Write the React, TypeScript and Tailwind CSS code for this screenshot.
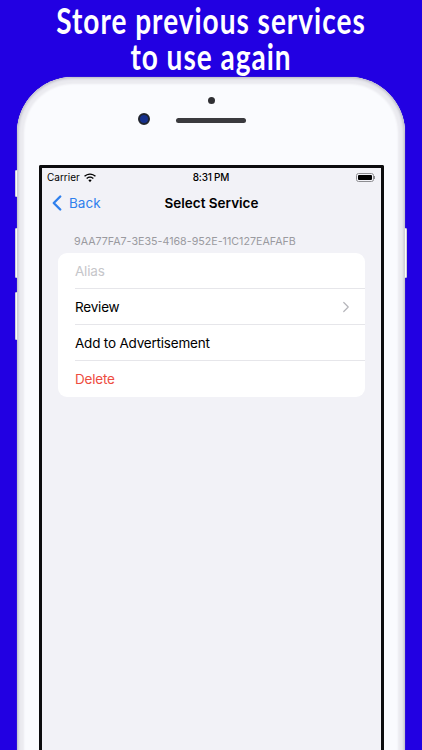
import { ChevronLeft, ChevronRight } from 'lucide-react'

function SideButton({ className }: { className: string }) {
  return <div className={`absolute w-[3px] rounded-[1px] bg-[#fbfbfd] border border-[#cfcfd8] ${className}`} />
}

function Row({ label, color, last, chevron }: { label: string; color: string; last?: boolean; chevron?: boolean }) {
  return (
    <div className="pl-[17px]">
      <div className={`h-[36px] flex items-center justify-between pr-[15px] ${last ? '' : 'border-b border-[#e6e6ea]'}`}>
        <span className={`text-[13.5px] tracking-[-0.2px] pt-[1px] ${color}`}>{label}</span>
        {chevron && <ChevronRight size={18} strokeWidth={1.6} className="text-[#b5b5ba] mr-[-5px]" />}
      </div>
    </div>
  )
}

export default function App() {
  return (
    <div className="relative w-[422px] h-[750px] overflow-hidden bg-[#2200e2] font-['Inter',sans-serif] flex flex-col">
      <h1 className="h-[77px] flex-none pt-[1px] text-center text-white font-['Lato',sans-serif] font-bold text-[28px] leading-[28px] tracking-[1px] scale-y-[1.3] origin-top">
        Store previous services
        <br />
        to use again
      </h1>

      <div className="relative mx-[17px] h-[720px] flex-none rounded-t-[56px] bg-[#fafbfe] shadow-[inset_0_0_3px_1px_#b4b4c0,inset_0_0_2px_7px_#ebebf0,0_0_1px_#9a9ab0] pl-[22px] pr-[21px] pt-[88px] flex flex-col">
        <SideButton className="left-[-2px] top-[93px] h-[27px]" />
        <SideButton className="left-[-2px] top-[151px] h-[50px]" />
        <SideButton className="left-[-2px] top-[215px] h-[48px]" />
        <SideButton className="right-[-2px] top-[151px] h-[50px]" />

        {/* speaker, sensor and camera */}
        <div className="absolute left-0 right-0 top-[20px] flex justify-center">
          <div className="w-[7px] h-[7px] rounded-full bg-[#303034]" />
        </div>
        <div className="absolute left-0 right-0 top-[41px] flex justify-center">
          <div className="w-[70px] h-[5px] rounded-full bg-[#3a3a3e]" />
        </div>
        <div className="absolute left-[121px] top-[36px] w-[12px] h-[12px] rounded-full bg-[#16308c] border-[2px] border-[#20242e]" />

        <div className="flex-1 border-[3px] border-b-0 border-[#0c0c0e] rounded-t-[2px] bg-[#f2f2f7] flex flex-col">
          <div className="h-[19px] grid grid-cols-3 items-center pl-[5px] pr-[6px] text-[10px] text-black">
            <div className="flex items-center gap-[3px]">
              <span>Carrier</span>
              <svg width="14" height="10" viewBox="0 0 16 12" fill="#000">
                <path d="M8 2.2c2.3 0 4.4.9 6 2.4l1.1-1.2C13.2 1.6 10.7.5 8 .5S2.8 1.6.9 3.4L2 4.6c1.6-1.5 3.7-2.4 6-2.4z" />
                <path d="M8 5.8c1.3 0 2.5.5 3.4 1.4l1.2-1.2C11.4 4.8 9.8 4.1 8 4.1S4.6 4.8 3.4 6l1.2 1.2C5.5 6.3 6.7 5.8 8 5.8z" />
                <path d="M8 7.7c-.8 0-1.5.3-2 .8L8 11l2-2.5c-.5-.5-1.2-.8-2-.8z" />
              </svg>
            </div>
            <span className="font-medium text-center tracking-[-0.2px]">8:31 PM</span>
            <div className="flex items-center justify-end">
              <div className="w-[18px] h-[9px] rounded-[2.5px] border border-[#8e8e92] p-[1px]">
                <div className="w-full h-full rounded-[1px] bg-black" />
              </div>
              <div className="w-[1px] h-[3px] bg-[#8e8e92]" />
            </div>
          </div>

          <div className="relative h-[32px] flex items-center justify-center">
            <div className="absolute left-[4px] top-0 h-full flex items-center text-[#2f80ed]">
              <ChevronLeft size={26} strokeWidth={2.2} className="ml-[-2px]" />
              <span className="text-[13.5px] ml-[-1px]">Back</span>
            </div>
            <span className="text-[13.5px] font-semibold text-black">Select Service</span>
          </div>

          <div className="mt-[16px] pl-[32px] text-[10.7px] leading-[14px] text-[#9a9a9f]">9AA77FA7-3E35-4168-952E-11C127EAFAFB</div>

          <div className="mt-[4px] mx-[16px] rounded-[9px] bg-white">
            <Row label="Alias" color="text-[#c6c6ca]" />
            <Row label="Review" color="text-black" chevron />
            <Row label="Add to Advertisement" color="text-black" />
            <Row label="Delete" color="text-[#ee4c40]" last />
          </div>
        </div>
      </div>
    </div>
  )
}
